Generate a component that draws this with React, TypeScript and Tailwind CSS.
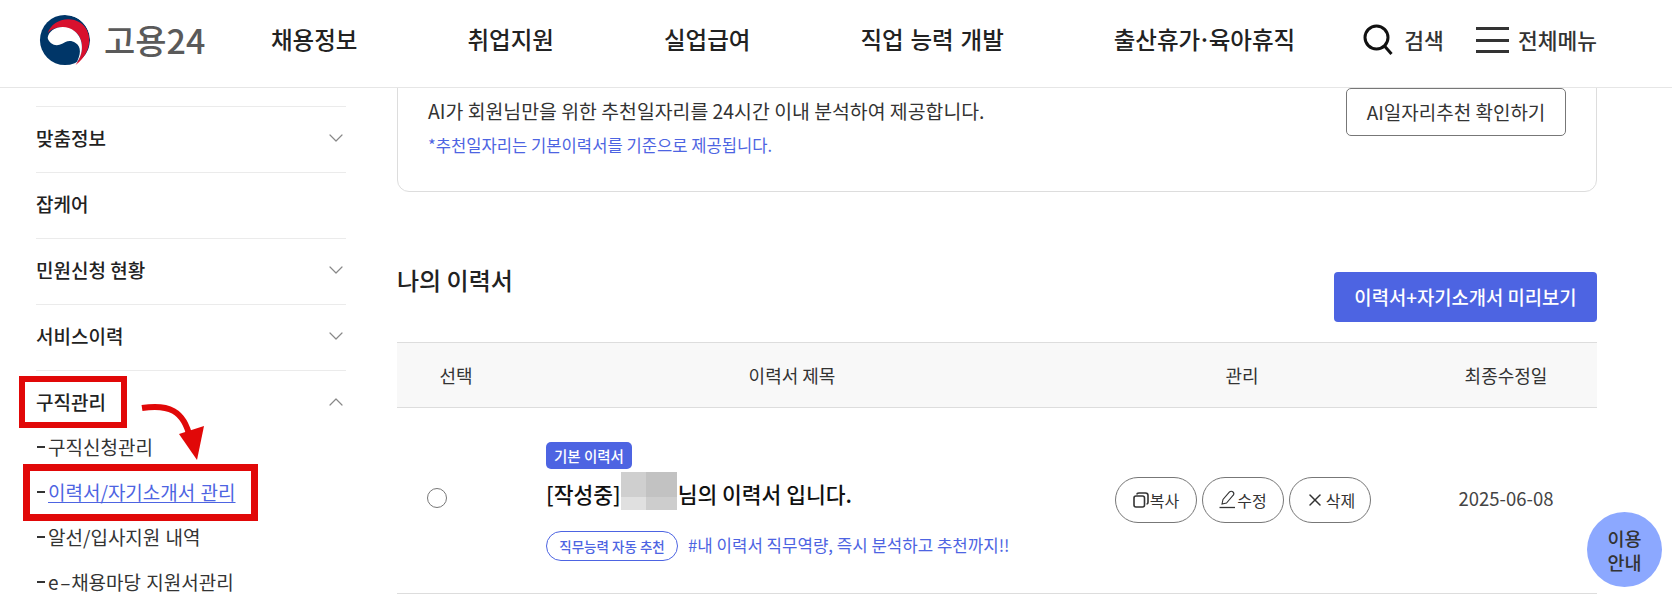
import { ChevronDown, ChevronUp, X } from 'lucide-react';

const font = { fontFamily: '"Noto Sans CJK KR", "Noto Sans", sans-serif' };

const subItems = ['구직신청관리', '이력서/자기소개서 관리', '알선/입사지원 내역'];

const Logo = () => (
	<svg width="52" height="52" viewBox="0 0 54 54" className="shrink-0">
		<circle cx="27" cy="27" r="26" fill="#003668" />
		<path d="M27 1C41 1 53 13 53 27C53 40 46 49 38 53L53 53L53 1Z" fill="#fff" />
		<path d="M9 20C13 7 30 1 43 9C55 17 57 38 38 53C47 41 47 25 37 18C27 12 14 13 9 20Z" fill="#d8112e" />
		<path d="M9 25C10 15 26 9 37 18C47 26 47 42 38 52C44 42 44 34 38 30C32 26 27 29 24 31C18 34 11 32 9 25Z" fill="#fff" />
	</svg>
);

const CopyIcon = () => (
	<svg width="16" height="16" viewBox="0 0 16 16" fill="none" stroke="#333" strokeWidth="1.6">
		<rect x="1" y="4" width="10.5" height="11" rx="2" />
		<path d="M4 2.5C4 1.5 5 1 6 1H12.500C14 1 15 2 15 3.500V10C15 11 14.500 12 13.500 12" />
	</svg>
);

const PencilIcon = () => (
	<svg width="17" height="19" viewBox="0 0 17 19" fill="none" stroke="#333" strokeWidth="1.1">
		<path d="M3 14L4 9.500L10.500 2C11.500 1 13 1 14 2C15 3 15 4.500 14 5.500L7.500 13Z" />
		<path d="M0.500 17.500H16" strokeWidth="1.3" />
	</svg>
);

const SideRow = ({ label, chevron }: { label: string; chevron?: boolean }) => (
	<div className="flex h-[66px] items-center justify-between border-t border-[#ebebeb] pb-[3px]">
		<span className="text-[19px] font-medium text-[#222]">{label}</span>
		{chevron && <ChevronDown size={24} strokeWidth={1.200} className="-mr-[2px] text-[#888]" />}
	</div>
);

const ActionButton = ({ icon, label }: { icon: React.ReactNode; label: string }) => (
	<button className="flex h-[46px] w-[82px] items-center justify-center gap-[1px] rounded-full border border-[#777] bg-white text-[16px] text-[#333]">
		{icon}
		{label}
	</button>
);

export default function App() {
	return (
		<div className="h-[609px] w-[1672px] overflow-hidden bg-white" style={font}>
			<header className="relative z-10 flex h-[88px] items-center border-b border-[#e6e6e6] bg-white pb-[7px] pl-[39px] pr-[75px]">
				<div className="flex w-[232px] items-center gap-[13px]">
					<Logo />
					<span className="text-[34px] font-medium leading-none text-[#5a5a5a]">고용24</span>
				</div>
				<nav className="flex gap-[110px] text-[23.500px] font-medium text-[#222] [word-spacing:1.5px]">
					<a>채용정보</a>
					<a>취업지원</a>
					<a>실업급여</a>
					<a>직업 능력 개발</a>
					<a>
						출산휴가<span className="-mx-[2.500px]">·</span>육아휴직
					</a>
				</nav>
				<div className="ml-auto flex items-center">
					<svg width="30" height="32" viewBox="0 0 30 32" fill="none" stroke="#111" strokeWidth="3">
						<circle cx="13.500" cy="13.500" r="11.500" />
						<path d="M21.500 22L28.500 30" />
					</svg>
					<span className="ml-[11px] text-[21.500px] font-medium text-[#333]">검색</span>
					<div className="ml-[32px] flex h-[26px] w-[33px] flex-col justify-between">
						<div className="h-[3px] bg-[#333]" />
						<div className="h-[3px] bg-[#333]" />
						<div className="h-[3px] bg-[#333]" />
					</div>
					<span className="ml-[9px] text-[21.500px] font-medium text-[#333]">전체메뉴</span>
				</div>
			</header>

			<div className="flex">
				<aside className="relative ml-[36px] w-[310px] shrink-0 pt-[18px]">
					<SideRow label="맞춤정보" chevron />
					<SideRow label="잡케어" />
					<SideRow label="민원신청 현황" chevron />
					<SideRow label="서비스이력" chevron />
					<div className="flex h-[66px] items-center justify-between border-t border-[#ebebeb] pb-[3px]">
						<span className="text-[19px] font-medium text-[#222]">구직관리</span>
						<ChevronUp size={24} strokeWidth={1.200} className="-mr-[2px] text-[#888]" />
					</div>
					<ul className="-mt-[9px] flex flex-col gap-[5px] text-[19px] leading-[40px] text-[#333] [word-spacing:1px]">
						{subItems.map((item, i) => (
							<li key={item} className="flex items-center">
								<span className="ml-[1px] mr-[3px] h-[2px] w-[8px] bg-[#333]" />
								<span className={i === 1 ? 'text-[#4d64e2] underline underline-offset-2' : ''}>{item}</span>
							</li>
						))}
						<li className="flex items-center">
							<span className="ml-[1px] mr-[3px] h-[2px] w-[8px] bg-[#333]" />
							<span>
								e<span className="mx-[3px] inline-block scale-x-[1.700]">-</span>채용마당 지원서관리
							</span>
						</li>
					</ul>
					{/* annotation boxes and arrow drawn over the menu */}
					<div className="absolute left-[-17px] top-[288px] h-[52px] w-[108px] border-[6px] border-[#e10808]" />
					<div className="absolute left-[-13px] top-[376px] h-[57px] w-[235px] border-[7px] border-[#e10808]" />
					<svg className="absolute left-[100px] top-[310px]" width="70" height="65" viewBox="0 0 70 65">
						<path d="M6 10C32 6 48 12 54 40" fill="none" stroke="#e10808" strokeWidth="6" />
						<path d="M43 36L68 28L61 62Z" fill="#e10808" />
					</svg>
				</aside>

				<main className="ml-[51px] w-[1200px] shrink-0 -mt-[20px]">
					<section className="flex h-[124px] justify-between rounded-[12px] border border-[#ddd] pl-[30px] pr-[30px] pt-[19px]">
						<div className="pt-[9px]">
							<p className="text-[19.400px] leading-[28px] text-[#333]">AI가 회원님만을 위한 추천일자리를 24시간 이내 분석하여 제공합니다.</p>
							<p className="mt-[8px] text-[16.600px] leading-[24px] text-[#4d64e2]">*추천일자리는 기본이력서를 기준으로 제공됩니다.</p>
						</div>
						<button className="h-[48px] w-[220px] rounded-[5px] border border-[#777] text-[19px] text-[#333]">AI일자리추천 확인하기</button>
					</section>

					<div className="mt-[80px] flex items-start justify-between">
						<h2 className="-mt-[10px] text-[24px] font-medium leading-[36px] text-[#222]">나의 이력서</h2>
						<button className="h-[50px] w-[263px] rounded-[4px] bg-[#4d64e2] text-[18.800px] font-medium text-white">이력서+자기소개서 미리보기</button>
					</div>

					<div className="mt-[20px] grid h-[66px] grid-cols-[118px_554px_346px_182px] items-center border-y border-[#ddd] bg-[#f8f8f8] text-center text-[18px] text-[#333]">
						<span>선택</span>
						<span>이력서 제목</span>
						<span>관리</span>
						<span>최종수정일</span>
					</div>

					<div className="grid h-[186px] grid-cols-[118px_554px_346px_182px] items-center border-b border-[#ddd]">
						<div className="pb-[5px] pl-[30px]">
							<div className="h-[20px] w-[20px] rounded-full border border-[#777]" />
						</div>
						<div className="pl-[31px] pt-[2px]">
							<span className="inline-block h-[27px] rounded-[5px] bg-[#4d64e2] px-[8px] text-[14.500px] font-medium leading-[27px] text-white">기본 이력서</span>
							<div className="mt-[3px] flex h-[38px] items-center text-[21.500px] font-medium text-[#111]">
								<span className="pt-[6px]">[작성중]</span>
								<span className="mr-[1px] grid h-[38px] w-[56px] grid-cols-[25px_31px] grid-rows-[25px_13px]">
									<span className="bg-[#cfcfcf]" />
									<span className="bg-[#c2c2c2]" />
									<span className="bg-[#e0e0e0]" />
									<span className="bg-[#cdcdcd]" />
								</span>
								<span className="pt-[6px]">님의 이력서 입니다.</span>
							</div>
							<div className="mt-[21px] flex items-center gap-[10px]">
								<span className="flex h-[30px] w-[132px] items-center justify-center rounded-full border border-[#4d64e2] text-[13.500px] font-medium text-[#4d64e2]">직무능력 자동 추천</span>
								<span className="text-[16.800px] text-[#4d64e2]">#내 이력서 직무역량, 즉시 분석하고 추천까지!!</span>
							</div>
						</div>
						<div className="flex gap-[5px] pb-[2px] pl-[46px]">
							<ActionButton icon={<CopyIcon />} label="복사" />
							<ActionButton icon={<PencilIcon />} label="수정" />
							<ActionButton icon={<X size={20} strokeWidth={1.800} />} label="삭제" />
						</div>
						<div className="pb-[4px] text-center text-[18.500px] text-[#444]">2025-06-08</div>
					</div>
				</main>
			</div>

			<div className="fixed left-[1587px] top-[512px] z-20 flex h-[75px] w-[75px] items-center justify-center rounded-full bg-[#8ca8ff] text-center text-[18.500px] font-medium leading-[24px] text-[#333]">
				이용
				<br />
				안내
			</div>
		</div>
	);
}
